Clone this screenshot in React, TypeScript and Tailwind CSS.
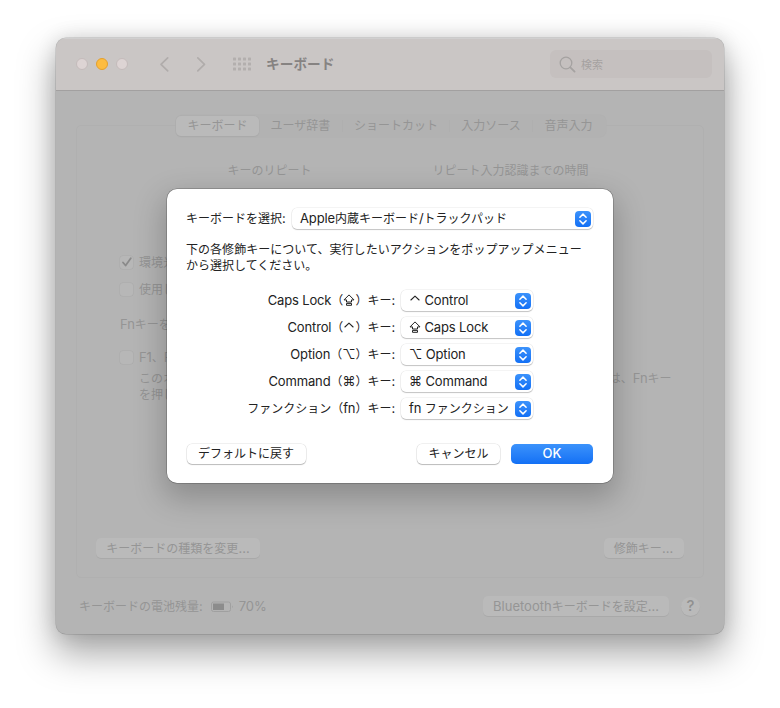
import React from "react";

const LATIN = "font-['Inter','Noto_Sans_CJK_JP',sans-serif]";
const KANA = "font-['Noto_Sans_CJK_JP',sans-serif]";

function CapsLockGlyph() {
  return (
    <svg className="inline-block align-[-1.500px]" width="12" height="12" viewBox="0 0 12 12" fill="none" stroke="currentColor" strokeWidth="1" strokeLinejoin="round">
      <path d="M6 .9 1 5.900h2.500v2.100h5V5.900H11zM3.500 9.400h5v1.900h-5z" />
    </svg>
  );
}

function ControlGlyph() {
  return (
    <svg className="inline-block align-[-1.500px]" width="12" height="12" viewBox="0 0 12 12" fill="none" stroke="currentColor" strokeWidth="1.1" strokeLinecap="round" strokeLinejoin="round">
      <path d="M1.900 6 6 2.200 10.100 6" />
    </svg>
  );
}

/** Splits mixed text so that Latin runs are one size larger than the Japanese ones. */
function T({ children, latin = "tracking-[-0.14px]" }: { children: string; latin?: string }) {
  const runs = children.match(/\u21ea|\u2303|[\u0020-\u007e\u2026\u2318\u2325]+|[^\u0020-\u007e\u2026\u21ea\u2303\u2318\u2325]+/g) ?? [];
  return (
    <span className="-mt-px whitespace-pre">
      {runs.map((r, i) => {
        if (r === "\u21ea") return <CapsLockGlyph key={i} />;
        if (r === "\u2303") return <ControlGlyph key={i} />;
        return /^[\u0020-\u007e\u2026\u2318\u2325]/.test(r) ? (
          <span key={i} className={`text-[13px] ${LATIN} ${latin}`}>{r}</span>
        ) : (
          <span key={i} className={`${KANA} text-[12px]`}>{r}</span>
        );
      })}
    </span>
  );
}

function Stepper() {
  return (
    <span className="flex h-4 w-4 items-center justify-center rounded-[4px] bg-linear-to-b from-[#3b92fb] to-[#1270f5]">
      <svg width="16" height="16" viewBox="0 0 16 16" fill="none" stroke="white" strokeWidth="1.5" strokeLinecap="round" strokeLinejoin="round">
        <path d="M4.900 6.200 8 3.100l3.100 3.100M4.900 9.800 8 12.900l3.100-3.100" />
      </svg>
    </span>
  );
}

function Popup({ value, className }: { value: string; className: string }) {
  return (
    <div className={`flex h-[21px] items-center justify-between rounded-[5px] bg-white pr-[2px] pl-[8px] shadow-[0_0_0_0.5px_rgba(0,0,0,0.09),0_1px_1px_rgba(0,0,0,0.2)] ${className}`}>
      <span className="-mt-[2px] flex h-4 items-center leading-4"><T>{value}</T></span>
      <Stepper />
    </div>
  );
}

function PushButton({ label, className }: { label: string; className: string }) {
  return (
    <button className={`flex h-5 items-center justify-center rounded-[5px] bg-white pb-[2px] leading-4 shadow-[0_0_0_0.5px_rgba(0,0,0,0.12),0_1px_1px_rgba(0,0,0,0.22)] ${className}`}>
      <T>{label}</T>
    </button>
  );
}

function DimButton({ label, className }: { label: string; className: string }) {
  return (
    <button className={`flex h-5 items-center justify-center rounded-[5px] bg-[#bababa] leading-4 shadow-[0_1px_0.5px_#a9a9a9] ${className}`}>
      <T latin="tracking-[0px]">{label}</T>
    </button>
  );
}

function Check({ on = false }: { on?: boolean }) {
  return (
    <span className="flex h-[13px] w-[13px] shrink-0 items-center justify-center rounded-[3px] bg-[#b7b7b7] shadow-[0_0_0_0.5px_#a9a9a9]">
      {on && (
        <svg width="12" height="12" viewBox="0 0 12 12" fill="none" stroke="#8a8a8a" strokeWidth="1.8" strokeLinecap="round" strokeLinejoin="round">
          <path d="M2 6.500 4.600 9.500 9.800 2.200" />
        </svg>
      )}
    </span>
  );
}

const tabs = [
  { label: "ユーザ辞書", width: "w-[83px]" },
  { label: "ショートカット", width: "w-[106px]" },
  { label: "入力ソース", width: "w-[82px]" },
  { label: "音声入力", width: "w-[71px]" },
];

const modifiers = [
  { label: "Caps Lock（⇪）キー:", value: "⌃ Control" },
  { label: "Control（⌃）キー:", value: "⇪ Caps Lock" },
  { label: "Option（⌥）キー:", value: "⌥ Option" },
  { label: "Command（⌘）キー:", value: "⌘ Command" },
  { label: "ファンクション（fn）キー:", value: "fn ファンクション" },
];

function TitleBar() {
  return (
    <header className="flex h-[53px] shrink-0 items-center border-b border-[#a2a0a0] bg-[#cac6c5] shadow-[inset_0_1px_0_#d0cfcf]">
      <div className="ml-[20.500px] flex gap-[8px]">
        <span className="h-3 w-3 rounded-full border border-[#c4bbbb] bg-[#ddd4d4]" />
        <span className="h-3 w-3 rounded-full border border-[#e5a02c] bg-[#fdbc40]" />
        <span className="h-3 w-3 rounded-full border border-[#c4bbbb] bg-[#ddd4d4]" />
      </div>
      <svg className="ml-[30px]" width="50" height="18" viewBox="0 0 50 18" fill="none" stroke="#b0acab" strokeWidth="1.7" strokeLinecap="round" strokeLinejoin="round">
        <path d="M9.700 2.800 3 9.300l6.700 6.500M39.800 2.800 46.500 9.300l-6.700 6.500" />
      </svg>
      <svg className="ml-[24px]" width="20" height="14" viewBox="0 0 20 14" fill="#b3afae">
        {[0, 1, 2].map((r) => [0, 1, 2, 3].map((c) => (
          <rect key={`${r}${c}`} x={1 + c * 5} y={0.5 + r * 5} width="3" height="3" rx="0.6" />
        )))}
      </svg>
      <h1 className={`-mt-[3px] ml-[14px] text-[13.700px] leading-4 font-bold text-[#868382] ${KANA}`}>キーボード</h1>
      <div className="mr-[12px] ml-auto flex h-7 w-[162px] items-center rounded-[6px] bg-[#c5c0bf] pl-[9px]">
        <svg width="17" height="17" viewBox="0 0 17 17" fill="none" stroke="#a5a2a1" strokeWidth="1.3" strokeLinecap="round">
          <circle cx="7" cy="7" r="5.8" />
          <path d="m11.300 11.300 4.300 4.300" strokeWidth="1.8" />
        </svg>
        <span className={`ml-[5px] text-[11px] leading-4 text-[#a5a2a1] ${KANA}`}>検索</span>
      </div>
    </header>
  );
}

function KeyboardPane() {
  return (
    <main className="flex flex-1 flex-col text-[#959595]">
      <div className="relative z-10 mt-6 ml-[120.500px] flex h-[22px] w-[430px] items-center rounded-[6px] bg-[#b2b2b2] shadow-[0_0_0_0.5px_#b0b0b0]">
        <span className="flex h-5 w-[83px] items-center justify-center rounded-[5px] bg-[#bababa] pb-[2px] leading-4 shadow-[0_0_0_0.5px_#acacac,0_1px_1px_#a8a8a8]">
          <T>キーボード</T>
        </span>
        {tabs.map((t, i) => (
          <React.Fragment key={t.label}>
            {i > 0 && <span className="h-3 w-px bg-[#afafaf]" />}
            <span className={`flex h-5 items-center justify-center pb-[2px] leading-4 ${t.width}`}><T>{t.label}</T></span>
          </React.Fragment>
        ))}
      </div>
      <section className="mr-[20.500px] ml-[20.500px] -mt-3 flex h-[453px] flex-col rounded-[5px] border border-[#b0b0b0] px-[19px] pt-9">
        <div className="flex h-4 items-center gap-[121px] pl-[131.500px] leading-4">
          <T>キーのリピート</T>
          <T>リピート入力認識までの時間</T>
        </div>
        <div className="ml-[24px] flex flex-col leading-4">
          <label className="mt-[76px] flex h-4 items-center gap-[6px]"><Check on /><T>環境光</T></label>
          <label className="mt-[11px] flex h-4 items-center gap-[6px]"><Check /><T>使用し</T></label>
          <div className="mt-[19px] flex h-4 items-center"><T>Fnキーを</T></div>
          <label className="mt-[17px] flex h-4 items-center gap-[6px]"><Check /><T>F1、F2</T></label>
          <p className="mt-[5px] mr-[12px] ml-[19px] flex flex-col">
            <span className="flex h-4 items-center justify-between"><T>このオ</T><T>は、Fnキー</T></span>
            <span className="flex h-4 items-center"><T>を押し</T></span>
          </p>
        </div>
        <div className="mt-[136px] flex justify-between">
          <DimButton label="キーボードの種類を変更…" className="w-[164px]" />
          <DimButton label="修飾キー…" className="w-[80px]" />
        </div>
      </section>
      <footer className="mt-[18px] flex h-5 items-center pr-[24px] pl-[23.500px] leading-4">
        <T>キーボードの電池残量:</T>
        <svg className="mt-px ml-2" width="23" height="12" viewBox="0 0 23 12" fill="none">
          <rect x="0.5" y="1" width="19" height="9.500" rx="2" stroke="#a0a0a0" />
          <rect x="2" y="2.500" width="11" height="6.500" fill="#8c8c8c" />
          <path d="M21 4.500c1 .4 1 2.200 0 2.600z" fill="#a0a0a0" />
        </svg>
        <span className="ml-[5px] flex"><T latin="tracking-[0px]">70%</T></span>
        <DimButton label="Bluetoothキーボードを設定…" className="ml-auto w-[186px]" />
        <button className={`ml-3 flex h-[19px] w-[19px] items-center justify-center rounded-full bg-[#bababa] text-[15px] leading-4 font-medium text-[#909090] shadow-[0_1px_0.5px_#a9a9a9] ${LATIN}`}>?</button>
      </footer>
    </main>
  );
}

function ModifierDialog() {
  return (
    <div role="dialog" className="absolute top-[189px] left-[167px] z-20 flex h-[294px] w-[446px] flex-col rounded-[10px] bg-white px-5 pt-[19px] text-[#222222] shadow-[0_0_0_0.5px_rgba(0,0,0,0.35),0_12px_30px_4px_rgba(0,0,0,0.22)]">
      <div className="-ml-px flex items-center leading-4">
        <span className="-mt-[2px] flex h-4 items-center"><T>キーボードを選択:</T></span>
        <Popup value="Apple内蔵キーボード/トラックパッド" className="ml-auto w-[301px]" />
      </div>
      <p className="mt-[12px] -ml-px flex flex-col leading-4">
        <span className="flex h-4 items-center tracking-[0.04px]"><T>下の各修飾キーについて、実行したいアクションをポップアップメニュー</T></span>
        <span className="flex h-4 items-center"><T>から選択してください。</T></span>
      </p>
      <div className="mt-[17px] flex flex-col gap-[6px]">
        {modifiers.map((m) => (
          <div key={m.label} className="flex h-[21px] items-center leading-4">
            <span className="-mt-[2px] flex h-4 w-[208px] items-center justify-end"><T>{m.label}</T></span>
            <Popup value={m.value} className="ml-[6px] w-[132px]" />
          </div>
        ))}
      </div>
      <div className="mt-[25px] flex items-center">
        <PushButton label="デフォルトに戻す" className="-ml-[0.500px] w-[119px]" />
        <PushButton label="キャンセル" className="ml-auto w-[83px]" />
        <button className={`ml-[11px] flex h-5 w-[82px] items-center justify-center rounded-[5px] bg-linear-to-b from-[#3b92fb] to-[#1270f5] text-[13px] font-medium text-white ${LATIN}`}>OK</button>
      </div>
    </div>
  );
}

export default function App() {
  return (
    <div className="relative h-[708px] w-[780px] overflow-hidden bg-white pt-[38px] pl-[55.500px]">
      <div className="flex h-[596px] w-[668.500px] flex-col overflow-hidden rounded-[10px] bg-[#b4b4b4] shadow-[0_0_0_0.5px_rgba(0,0,0,0.2),0_18px_36px_2px_rgba(0,0,0,0.34),0_0_20px_rgba(0,0,0,0.12)]">
        <TitleBar />
        <KeyboardPane />
      </div>
      <ModifierDialog />
    </div>
  );
}
